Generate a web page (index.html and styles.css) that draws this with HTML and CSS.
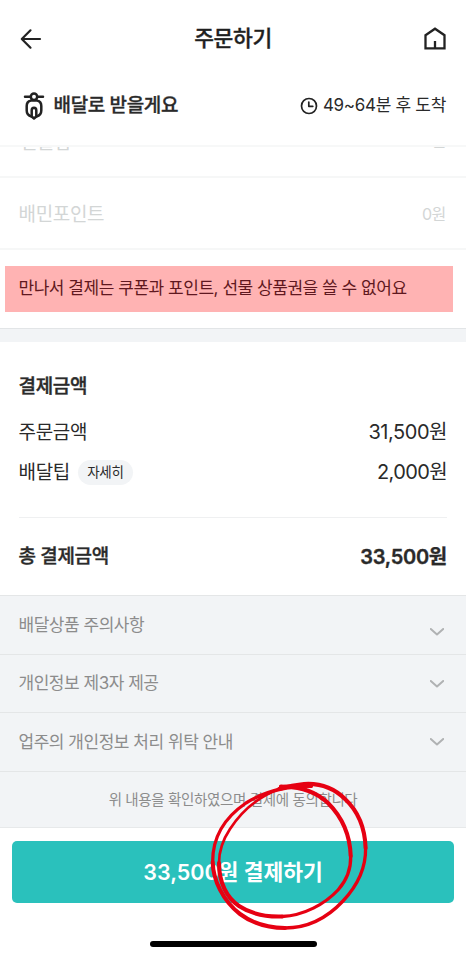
FILE: index.html
```
<!DOCTYPE html>
<html lang="ko">
<head>
<meta charset="utf-8">
<meta name="viewport" content="width=device-width, initial-scale=1">
<title>주문하기</title>
<link rel="stylesheet" href="styles.css">
</head>
<body>
<main class="screen">
  <header class="topbar">
    <svg class="icon-back" viewBox="0 0 22 22"><path d="M20 11H2M10.500 2.300L1.800 11l8.700 8.700"/></svg>
    <h1 class="title">주문하기</h1>
    <svg class="icon-home" viewBox="0 0 22 23"><path d="M1.500 8.200L11 1.700l9.500 6.500V21.300H1.500zM11 21V14"/></svg>
  </header>
  <section class="delivery">
    <svg class="icon-scooter" viewBox="0 0 22 28"><path d="M2 4.700H7.500M14.500 4.700H20"/><circle cx="11" cy="4.700" r="3.200"/><path d="M7.800 8.500C4.700 9.300 3.700 11.500 3.700 14v4.500c0 3.200 1.600 5.200 4.800 6M14.200 8.500c3.100.8 4.100 3 4.100 5.500v4.500c0 3.200-1.600 5.200-4.800 6M7.800 8.500h6.400"/><path d="M8.700 24.500V18.500a2.300 2.800 0 0 1 4.600 0v6L11 26.500z"/></svg>
    <strong class="delivery-name">배달로 받을게요</strong>
    <svg class="icon-clock" viewBox="0 0 18 18"><circle cx="9" cy="9" r="7.500"/><path d="M8.800 5v4.300h4"/></svg>
    <span class="eta">49~64분 후 도착</span>
  </section>
  <div class="row-clipped"><span>선물함</span><span class="zero">0원</span></div>
  <div class="row-point"><span>배민포인트</span><span class="zero">0원</span></div>
  <div class="notice-wrap"><p class="notice">만나서 결제는 쿠폰과 포인트, 선물 상품권을 쓸 수 없어요</p></div>
  <div class="band"></div>
  <section class="payment">
    <h2 class="pay-title">결제금액</h2>
    <div class="pay-row"><span>주문금액</span><span class="amount">31,500원</span></div>
    <div class="pay-row pay-tip"><span>배달팁</span><span class="detail">자세히</span><span class="amount">2,000원</span></div>
    <div class="total"><span>총 결제금액</span><span class="amount">33,500원</span></div>
  </section>
  <section class="terms">
    <div class="term term-first"><span>배달상품 주의사항</span><svg class="chevron" viewBox="0 0 14 8"><path d="M.8 1L7 6.500 13.200 1"/></svg></div>
    <div class="term"><span>개인정보 제3자 제공</span><svg class="chevron" viewBox="0 0 14 8"><path d="M.8 1L7 6.500 13.200 1"/></svg></div>
    <div class="term"><span>업주의 개인정보 처리 위탁 안내</span><svg class="chevron" viewBox="0 0 14 8"><path d="M.8 1L7 6.500 13.200 1"/></svg></div>
    <p class="agree">위 내용을 확인하였으며 결제에 동의합니다</p>
  </section>
  <footer class="bottom">
    <div class="pay-button"><span>33,500원 결제하기</span></div>
    <div class="home-indicator"></div>
  </footer>
  <svg class="scribble" viewBox="208 778 164 156">
    <path class="w3" d="M311 786C284 786 262 793 246 803C224 818 212.500 838 212.700 862"/>
    <path class="w4" d="M212.700 862C213 880 223 901 240 914C252 923 268 928 285 928"/>
    <path class="w3" d="M285 928C309 928 329 916 343 901C358 885 366 868 365.600 848"/>
    <path class="w4" d="M365.600 848C365 829 359 812 345 799C334 788 319 783 304 784C294 785 286 787 279 789"/>
    <path class="w2" d="M279 789C258 797 241 812 230 829C222 841 219 851 219 863"/>
    <path class="w4" d="M219 863C219 883 227 898 239 906C251 914 267 917 282 916.500"/>
    <path class="w3" d="M282 916.500C304 915.500 325 904 338 890C347 880 351 868 350.700 856"/>
    <path class="w4" d="M350.700 856C350 833 342 817 328 803C316 792 299 786 281 787"/>
    <path class="w4" d="M281 786.500C290 787.500 302 785 311 786"/>
  </svg>
</main>
</body>
</html>
```
FILE: styles.css
```
* { box-sizing: border-box; }
body { margin: 0; background: #fff; }
h1, h2, p { margin: 0; }
svg { display: block; flex: none; fill: none; stroke: #222; stroke-linecap: round; stroke-linejoin: round; }
.screen {
  position: relative; width: 466px; height: 958px; overflow: hidden;
  font-family: Inter, "Noto Sans CJK KR", sans-serif;
  color: #2a2a2a; font-size: 19px; line-height: 24px; letter-spacing: -.35px; white-space: nowrap;
}
.topbar { height: 77px; padding: 0 20px; display: flex; align-items: center; justify-content: space-between; }
.title { margin-top: -1px; font-size: 21.500px; font-weight: 500; color: #1f1f1f; -webkit-text-stroke: .35px; }
.icon-back { width: 22px; height: 22px; stroke-width: 2.200; }
.icon-home { width: 22px; height: 23px; stroke-width: 2.300; stroke-linecap: butt; stroke-linejoin: miter; }
.delivery { height: 70px; padding: 0 20px 11px 22.500px; display: flex; align-items: center; border-bottom: 2px solid #f7f8f8; }
.icon-scooter { width: 22px; height: 28px; stroke-width: 2.500; }
.delivery-name { margin-left: 9px; font-weight: 500; -webkit-text-stroke: .3px; }
.icon-clock { width: 18px; height: 18px; margin-left: auto; stroke-width: 1.700; }
.eta { margin: -2px 0 0 5px; font-size: 17px; letter-spacing: -.3px; }
.row-clipped, .row-point { display: flex; justify-content: space-between; padding: 0 20px 0 18.500px; color: #d3d6d6; border-bottom: 2px solid #f6f7f7; }
.row-clipped { height: 31px; padding-left: 20px; overflow: hidden; }
.row-clipped span { margin-top: -16px; }
.row-clipped .zero { margin-top: -18px; }
.row-point { height: 72px; align-items: center; }
.row-point span { margin-top: 3px; }
.row-point .zero { margin-top: 2px; }
.zero { font-size: 16px; }
.notice-wrap { height: 78px; padding: 16px 13px 0 5px; }
.notice { height: 46px; padding-left: 13.500px; background: #ffb3b3; color: #5f1820; font-size: 17px; line-height: 45px; letter-spacing: -.46px; }
.band { height: 14px; background: #f2f4f6; border-top: 1px solid #e2e5e7; }
.payment { height: 253px; padding: 33px 19px 0 18.500px; }
.pay-title { font-size: 19px; font-weight: 500; -webkit-text-stroke: .4px; }
.pay-row { display: flex; align-items: center; height: 24px; margin-top: 22px; }
.pay-tip { margin-top: 15px; }
.amount { margin: -2px 0 0 auto; font-size: 20px; letter-spacing: -.45px; }
.pay-tip .amount { letter-spacing: -.6px; margin-top: 0; }
.pay-tip > span:first-child { margin-top: 1px; }
.detail { width: 55px; height: 25px; margin-left: 8px; border-radius: 13px; background: #f2f4f6; font-size: 13.500px; line-height: 24px; text-align: center; }
.total { display: flex; align-items: center; height: 79px; margin-top: 33px; border-top: 1px solid #eff0f1; font-weight: 500; -webkit-text-stroke: .35px; }
.total .amount { font-weight: 600; letter-spacing: -.25px; margin-top: 0; }
.terms { height: 233px; background: #f2f4f6; border-top: 1px solid #e4e6e7; border-bottom: 1px solid #e7e9ea; color: #8c8c8c; }
.term { height: 58.500px; padding: 0 22px 0 18.500px; display: flex; align-items: center; justify-content: space-between; border-bottom: 1px solid #e4e6e7; font-size: 17px; letter-spacing: -.47px; }
.chevron { width: 14px; height: 8px; margin-top: 1px; stroke: #b0b2b3; stroke-width: 2; }
.term-first .chevron { margin-top: 14px; }
.agree { font-size: 14.500px; line-height: 56px; text-align: center; }
.bottom { height: 131px; padding: 13px 12px 0; }
.pay-button { height: 62px; border-radius: 5px; background: #2ac1bc; color: #fff; font-size: 21.500px; font-weight: 600; line-height: 62px; letter-spacing: -.03px; text-align: center; }
.home-indicator { width: 167px; height: 6.500px; margin: 37.500px auto 0; border-radius: 4px; background: #000; }
.scribble { position: absolute; left: 208px; top: 778px; width: 164px; height: 156px; stroke: #e60012; }
.w2 { stroke-width: 2.700; }
.w3 { stroke-width: 3.300; }
.w4 { stroke-width: 4.100; }
```
